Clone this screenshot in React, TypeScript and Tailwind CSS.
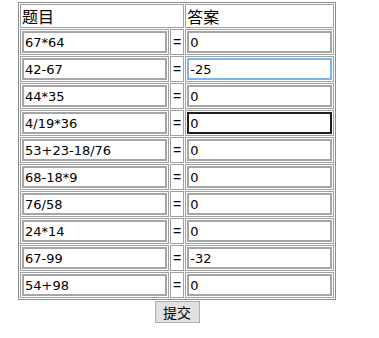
import React from 'react';

interface Item {
  q: string;
  a: string;
  state?: 'hover' | 'focus';
}

const items: Item[] = [
  { q: '67*64', a: '0' },
  { q: '42-67', a: '-25', state: 'hover' },
  { q: '44*35', a: '0' },
  { q: '4/19*36', a: '0', state: 'focus' },
  { q: '53+23-18/76', a: '0' },
  { q: '68-18*9', a: '0' },
  { q: '76/58', a: '0' },
  { q: '24*14', a: '0' },
  { q: '67-99', a: '-32' },
  { q: '54+98', a: '0' },
];

const inputBase =
  "w-[145px] h-[22px] border-2 bg-white pl-[1px] text-[13px] text-black outline-none font-['DejaVu_Sans',sans-serif]";

const App = () => {
  return (
    <div className="w-[379px] h-[338px] bg-white pl-[18px] pt-[2px] font-['Noto_Sans_CJK_SC',sans-serif] text-black">
      <table className="border-separate border-spacing-[1px] border border-[#8c8c8c]">
        <thead>
          <tr>
            <td colSpan={2} className="border border-[#a0a0a0] p-0 h-[24px] text-[16px] leading-[22px] pl-[1px]">
              题目
            </td>
            <td className="border border-[#a0a0a0] p-0 h-[24px] text-[16px] leading-[22px] pl-[1px]">
              答案
            </td>
          </tr>
        </thead>
        <tbody>
          {items.map((item, idx) => (
            <tr key={idx}>
              <td className="border border-[#a0a0a0] p-[1px]">
                <input readOnly defaultValue={item.q} className={`${inputBase} block border-[#a5a5a5]`} />
              </td>
              <td className="border border-[#a0a0a0] py-0 px-[2px] text-center text-[14px] leading-none font-['Liberation_Sans',sans-serif]">
                =
              </td>
              <td className="border border-[#a0a0a0] p-[1px]">
                <input
                  readOnly
                  defaultValue={item.a}
                  className={`${inputBase} block ${
                    item.state === 'hover'
                      ? 'border-[#7eb4ea]'
                      : item.state === 'focus'
                      ? 'border-[#1e1e1e]'
                      : 'border-[#a5a5a5]'
                  }`}
                />
              </td>
            </tr>
          ))}
        </tbody>
      </table>
      <div className="w-[318px] flex justify-center pt-[1px]">
        <button className="w-[45px] h-[22px] bg-[#e1e1e1] border border-[#adadad] text-[14px] leading-none text-black">
          提交
        </button>
      </div>
    </div>
  );
};

export default App;
